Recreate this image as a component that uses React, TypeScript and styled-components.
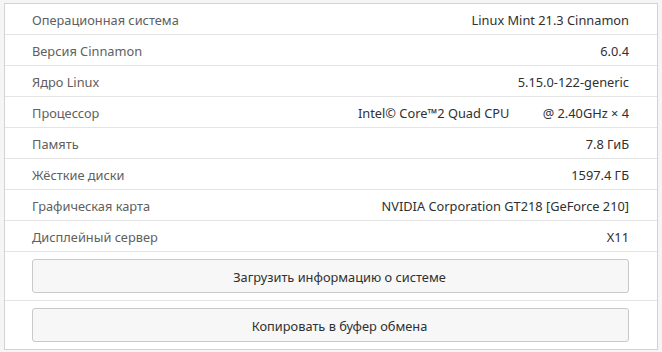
import React from "react";
import styled, { createGlobalStyle } from "styled-components";

const Global = createGlobalStyle`
  html, body { margin: 0; padding: 0; background: #f5f5f5; }
  body { font-family: "Noto Sans", "DejaVu Sans", sans-serif; }
`;

const Page = styled.div`
  padding: 3px 4px 2px 4px;
  height: 352px;
  box-sizing: border-box;
`;

const Frame = styled.div`
  background: #ffffff;
  border: 1px solid #d3d3d3;
  display: flex;
  flex-direction: column;
`;

const Row = styled.div`
  display: flex;
  align-items: center;
  justify-content: space-between;
  padding: 1px 28px 0 27px;
  box-sizing: border-box;
  height: 31px;
  border-bottom: 1px solid #e4e4e4;
  font-size: 12.8px;
`;

const Label = styled.span`
  color: #606060;
`;

const Value = styled.span`
  color: #303030;
  white-space: pre;
`;

const ButtonRow = styled.div<{ $last?: boolean }>`
  padding: 7px 28px 7px 27px;
  border-bottom: ${(p) => (p.$last ? "none" : "1px solid #e4e4e4")};
`;

const Button = styled.button`
  width: 100%;
  height: 34px;
  box-sizing: border-box;
  background: #f7f7f7;
  border: 1px solid #c9c9c9;
  border-radius: 3px;
  font-family: inherit;
  font-size: 12.8px;
  color: #303030;
  display: flex;
  align-items: center;
  justify-content: center;
  padding: 1px 0 0 18px;
`;

const rows: [string, string][] = [
  ["Операционная система", "Linux Mint 21.3 Cinnamon"],
  ["Версия Cinnamon", "6.0.4"],
  ["Ядро Linux", "5.15.0-122-generic"],
  ["Процессор", "Intel© Core™2 Quad CPU          @ 2.40GHz × 4"],
  ["Память", "7.8 ГиБ"],
  ["Жёсткие диски", "1597.4 ГБ"],
  ["Графическая карта", "NVIDIA Corporation GT218 [GeForce 210]"],
  ["Дисплейный сервер", "X11"],
];

export default function App() {
  return (
    <>
      <Global />
      <Page>
        <Frame>
          {rows.map(([l, v]) => (
            <Row key={l}>
              <Label>{l}</Label>
              <Value>{v}</Value>
            </Row>
          ))}
          <ButtonRow>
            <Button>Загрузить информацию о системе</Button>
          </ButtonRow>
          <ButtonRow $last>
            <Button>Копировать в буфер обмена</Button>
          </ButtonRow>
        </Frame>
      </Page>
    </>
  );
}
